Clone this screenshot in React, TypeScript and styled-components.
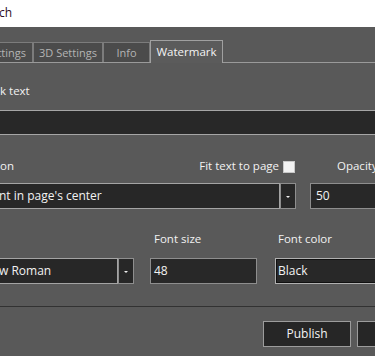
import React from "react";
import styled, { createGlobalStyle } from "styled-components";

const Global = createGlobalStyle`
  html, body { margin: 0; padding: 0; background: #595959; overflow: hidden; }
  body { font-family: "Open Sans", "Noto Sans", sans-serif; font-size: 11px; }
  #root { width: 375px; height: 356px; }
`;

const Window = styled.div`
  width: 375px;
  height: 356px;
  display: flex;
  flex-direction: column;
  background: #595959;
  overflow: hidden;
`;

const TitleBar = styled.div`
  height: 27px;
  flex-shrink: 0;
  background: #ffffff;
  display: flex;
  align-items: center;
  padding-bottom: 2px;
  box-sizing: border-box;
`;

const TitleText = styled.span`
  color: #2c0d26;
  font-size: 12px;
  margin-left: -1px;
  white-space: nowrap;
`;

const TabStrip = styled.div`
  display: flex;
  align-items: flex-end;
  height: 23px;
  margin-top: 13px;
  border-bottom: 1px solid #9a9a9a;
  box-sizing: border-box;
  flex-shrink: 0;
`;

const Tab = styled.div<{ $w: number; $active?: boolean; $cut?: boolean }>`
  flex: 0 0 ${(p) => p.$w}px;
  box-sizing: border-box;
  height: ${(p) => (p.$active ? 23 : 20)}px;
  margin-bottom: ${(p) => (p.$active ? -1 : 0)}px;
  display: flex;
  align-items: center;
  justify-content: ${(p) => (p.$cut ? "flex-end" : "center")};
  padding-right: ${(p) => (p.$cut ? 6 : 0)}px;
  padding-bottom: ${(p) => (p.$active ? 2 : 1)}px;
  overflow: hidden;
  white-space: nowrap;
  background: ${(p) => (p.$active ? "#5b5b5b" : "#4b4b4b")};
  color: ${(p) => (p.$active ? "#f4f4f4" : "#b4b4b4")};
  border: 1px solid ${(p) => (p.$active ? "#a0a0a0" : "#7c7c7c")};
  border-bottom: none;
  border-left-width: ${(p) => (p.$cut ? 0 : 1)}px;
  font-size: ${(p) => (p.$active ? 11.5 : 11)}px;
`;

const Content = styled.div`
  display: flex;
  flex-direction: column;
  padding-top: 20px;
`;

const Label = styled.div<{ $pl?: number }>`
  color: #f2f2f2;
  line-height: 15px;
  height: 15px;
  font-size: 11.5px;
  padding-left: ${(p) => p.$pl ?? 0}px;
  white-space: nowrap;
`;

const TextBar = styled.div`
  margin-top: 12px;
  height: 25px;
  box-sizing: border-box;
  background: #282828;
  border-top: 1px solid #a6a6a6;
  border-bottom: 1px solid #a6a6a6;
`;

const Row = styled.div<{ $mt: number }>`
  display: flex;
  align-items: center;
  margin-top: ${(p) => p.$mt}px;
`;

const Field = styled.div<{ $w?: number; $ml?: number }>`
  flex: ${(p) => (p.$w ? `0 0 ${p.$w}px` : "1 0 auto")};
  margin-left: ${(p) => p.$ml ?? 0}px;
  display: flex;
  align-items: center;
  justify-content: space-between;
  min-width: 0;
`;

const CheckGroup = styled.div`
  display: flex;
  align-items: center;
  gap: 4px;
  margin-right: 1px;
  color: #f2f2f2;
  font-size: 11.5px;
`;

const CheckBox = styled.span`
  width: 12px;
  height: 12px;
  box-sizing: border-box;
  background: #f2f2f2;
  border: 1px solid #c8c8c8;
  margin-top: 2px;
`;

const Combo = styled.div<{ $w: number }>`
  flex: 0 0 ${(p) => p.$w}px;
  height: 26px;
  display: flex;
`;

const ComboText = styled.div`
  flex: 1;
  box-sizing: border-box;
  background: #272727;
  border: 1px solid #a4a4a4;
  border-left: none;
  color: #f2f2f2;
  display: flex;
  align-items: center;
  white-space: nowrap;
  overflow: hidden;
  padding-bottom: 1px;
  text-indent: -1px;
  font-size: 12px;
`;

const ComboButton = styled.div`
  flex: 0 0 16px;
  box-sizing: border-box;
  background: #272727;
  border: 1px solid #8e8e8e;
  display: flex;
  align-items: center;
  justify-content: center;
`;

const Arrow = styled.span`
  width: 0;
  height: 0;
  border-left: 2px solid transparent;
  border-right: 2px solid transparent;
  border-top: 2px solid #f0f0f0;
  margin-top: 2px;
`;

const Input = styled.div<{ $w: number; $ml: number; $pl: number; $inset?: boolean; $top?: boolean }>`
  flex: 0 0 ${(p) => p.$w}px;
  margin-left: ${(p) => p.$ml}px;
  height: 26px;
  box-sizing: border-box;
  background: #282828;
  border: 1px solid ${(p) => (p.$inset ? "#b0b0b0" : "#8e8e8e")};
  box-shadow: ${(p) => (p.$inset ? "inset 0 0 0 1px #101010" : "none")};
  color: #f2f2f2;
  padding-left: ${(p) => p.$pl}px;
  display: flex;
  align-items: ${(p) => (p.$top ? "flex-start" : "center")};
  padding-top: ${(p) => (p.$top ? 3 : 0)}px;
  padding-bottom: ${(p) => (p.$top ? 0 : 1)}px;
  white-space: nowrap;
  font-size: 12px;
`;

const Separator = styled.div`
  margin-top: 22px;
  height: 1px;
  background: #323232;
`;

const ButtonRow = styled.div`
  display: flex;
  gap: 6px;
  padding-left: 263px;
  margin-top: 14px;
`;

const Button = styled.button`
  flex: 0 0 88px;
  height: 26px;
  box-sizing: border-box;
  background: #262626;
  border: 1px solid #9c9c9c;
  color: #f4f4f4;
  font-family: "Open Sans", "Noto Sans", sans-serif;
  font-size: 12px;
  padding: 0 0 2px 0;
  cursor: default;
`;

export default function App() {
  return (
    <Window>
      <Global />
      <TitleBar>
        <TitleText>ch</TitleText>
      </TitleBar>
      <TabStrip>
        <Tab $w={33} $cut>
          Settings
        </Tab>
        <Tab $w={70}>3D Settings</Tab>
        <Tab $w={47}>Info</Tab>
        <Tab $w={73} $active>
          Watermark
        </Tab>
      </TabStrip>
      <Content>
        <Label>k text</Label>
        <TextBar />
        <Row $mt={23}>
          <Field $w={296}>
            <Label>on</Label>
            <CheckGroup>
              <span>Fit text to page</span>
              <CheckBox />
            </CheckGroup>
          </Field>
          <Field $ml={14}>
            <Label $pl={27}>Opacity</Label>
          </Field>
        </Row>
        <Row $mt={10}>
          <Combo $w={296}>
            <ComboText>nt in page's center</ComboText>
            <ComboButton>
              <Arrow />
            </ComboButton>
          </Combo>
          <Input $w={90} $ml={14} $pl={5}>
            50
          </Input>
        </Row>
        <Row $mt={22}>
          <Field $w={134}>
            <Label>&nbsp;</Label>
          </Field>
          <Field $w={107} $ml={16}>
            <Label $pl={4}>Font size</Label>
          </Field>
          <Field $ml={18}>
            <Label $pl={3}>Font color</Label>
          </Field>
        </Row>
        <Row $mt={12}>
          <Combo $w={134}>
            <ComboText>w Roman</ComboText>
            <ComboButton>
              <Arrow />
            </ComboButton>
          </Combo>
          <Input $w={107} $ml={16} $pl={3} $top>
            48
          </Input>
          <Input $w={110} $ml={18} $pl={2} $inset>
            Black
          </Input>
        </Row>
        <Separator />
        <ButtonRow>
          <Button>Publish</Button>
          <Button>&nbsp;</Button>
        </ButtonRow>
      </Content>
    </Window>
  );
}
